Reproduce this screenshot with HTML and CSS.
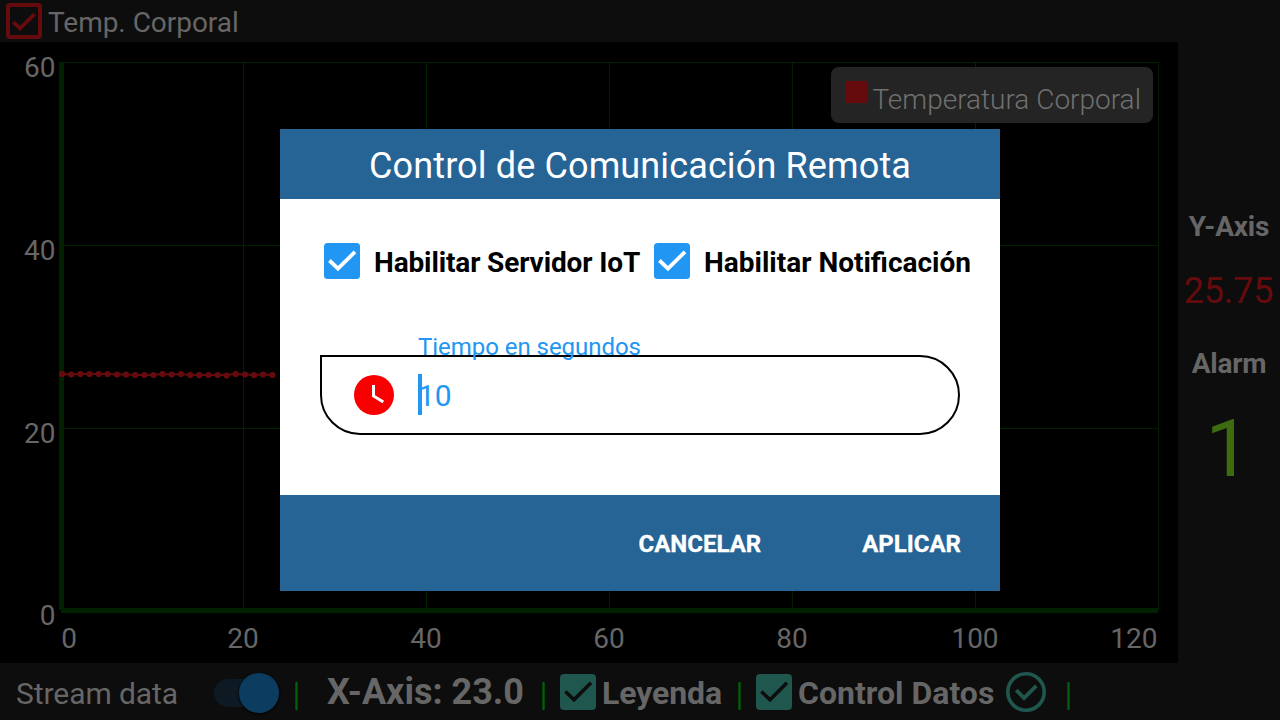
FILE: index.html
```html
<!DOCTYPE html>
<html lang="es">
<head>
<meta charset="utf-8">
<title>Control de Comunicación Remota</title>
<link rel="stylesheet" href="styles.css">
</head>
<body>
<div class="app">
  <header class="topbar">
    <svg class="top-check" width="36" height="36" viewBox="0 0 36 36"><rect x="2" y="2" width="32" height="32" rx="2" fill="none" stroke="#660b0d" stroke-width="4"/><path d="M7.3 19.2 14 25.4 28.5 11.2" fill="none" stroke="#660b0d" stroke-width="3.8"/></svg>
    <span class="top-label">Temp. Corporal</span>
  </header>
  <main class="middle">
    <svg class="chart" width="1178" height="621" viewBox="0 42 1178 621">
      <g fill="#002000">
        <rect x="64" y="62" width="1095" height="1"/><rect x="64" y="245" width="1095" height="1"/><rect x="64" y="428" width="1095" height="1"/>
        <rect x="243" y="62" width="1" height="547"/><rect x="426" y="62" width="1" height="547"/><rect x="609" y="62" width="1" height="547"/><rect x="792" y="62" width="1" height="547"/><rect x="975" y="62" width="1" height="547"/><rect x="1158" y="62" width="1" height="548"/>
        <rect x="59" y="62" width="5" height="548"/><rect x="61" y="608" width="1097" height="5"/>
      </g>
      <path d="M62 374 71 374.500 80 374 107 374 117 374.500 126 374.500 135 375 153 375 162 374 171 374.500 181 374 190 375 226 375 235 374 245 374.500 254 375 263 374.500 272 375" fill="none" stroke="#660b0d" stroke-width="2"/>
      <path class="points" d="M62 374h0M71.300 374.500h0M80.400 374h0M89.500 374h0M98.600 374h0M107.500 374h0M117 374.500h0M126 374.500h0M135.300 375h0M144.400 375h0M153.500 375h0M162.600 374h0M171.600 374.500h0M181 374h0M190.200 375h0M199.300 375.200h0M208.500 375h0M217.600 375h0M226.600 375.500h0M235.600 374h0M245 374.500h0M254 375h0M263.200 374.500h0M272.400 375h0"/>
      <g class="axis-text">
        <g text-anchor="end"><text x="55.500" y="77">60</text><text x="55.500" y="260">40</text><text x="55.500" y="443">20</text><text x="55.500" y="625">0</text><text x="1157.500" y="648">120</text></g>
        <g text-anchor="middle"><text x="69" y="648">0</text><text x="243" y="648">20</text><text x="426" y="648">40</text><text x="609" y="648">60</text><text x="792" y="648">80</text><text x="975" y="648">100</text></g>
      </g>
      <rect x="831" y="67" width="322" height="56" rx="8" fill="#242424"/>
      <rect x="845" y="81" width="22" height="22" fill="#660b0d"/>
      <text class="legend-text" x="872.500" y="109">Temperatura Corporal</text>
    </svg>
    <aside class="side">
      <div class="side-title">Y-Axis</div>
      <div class="side-value">25.75</div>
      <div class="side-title alarm">Alarm</div>
      <div class="side-alarm">1</div>
    </aside>
  </main>
  <footer class="bottombar">
    <span class="stream">Stream data</span>
    <span class="track"><span class="thumb"></span></span>
    <span class="sep s1"></span>
    <span class="xaxis">X-Axis: 23.0</span>
    <span class="sep s2"></span>
    <svg class="foot-check" width="36" height="36" viewBox="0 0 36 36"><rect width="36" height="36" rx="4" fill="#1f574e"/><path d="M5.400 17.500 14 25.700 31 8.800" fill="none" stroke="#0d0d0d" stroke-width="3.600"/></svg>
    <span class="foot-label leyenda">Leyenda</span>
    <span class="sep s3"></span>
    <svg class="foot-check" width="36" height="36" viewBox="0 0 36 36"><rect width="36" height="36" rx="4" fill="#1f574e"/><path d="M5.400 17.500 14 25.700 31 8.800" fill="none" stroke="#0d0d0d" stroke-width="3.600"/></svg>
    <span class="foot-label datos">Control Datos</span>
    <svg class="ring" width="40" height="40" viewBox="0 0 40 40"><circle cx="20" cy="20" r="18.200" fill="none" stroke="#1f574e" stroke-width="3.600"/><path d="M10.300 18.200 18 26 30.300 13.800" fill="none" stroke="#1f574e" stroke-width="3.800"/></svg>
    <span class="sep s4"></span>
  </footer>
  <section class="dialog">
    <h1 class="dialog-title"><span>Control de Comunicación Remota</span></h1>
    <div class="dialog-body">
      <div class="options">
        <svg width="36" height="36" viewBox="0 0 36 36"><rect width="36" height="36" rx="3.500" fill="#2196f3"/><path d="M5.400 17.500 14 25.700 31 8.800" fill="none" stroke="#fff" stroke-width="3.800"/></svg>
        <span class="option-label first">Habilitar Servidor IoT</span>
        <svg width="36" height="36" viewBox="0 0 36 36"><rect width="36" height="36" rx="3.500" fill="#2196f3"/><path d="M5.400 17.500 14 25.700 31 8.800" fill="none" stroke="#fff" stroke-width="3.800"/></svg>
        <span class="option-label second">Habilitar Notificación</span>
      </div>
      <div class="field">
        <svg width="40" height="40" viewBox="0 0 40 40"><circle cx="20" cy="20" r="20" fill="#f90000"/><path d="M19.500 10V21L29.300 27" fill="none" stroke="#fff" stroke-width="3"/></svg>
        <span class="caret"></span>
        <span class="field-value">10</span>
        <span class="hint">Tiempo en segundos</span>
      </div>
    </div>
    <div class="actions"><span class="cancel">CANCELAR</span><span class="apply">APLICAR</span></div>
  </section>
</div>
</body>
</html>
```
FILE: styles.css
```css
* { box-sizing: border-box; }
body { margin: 0; background: #000; font-family: Roboto, "Liberation Sans", sans-serif; color: #666; }
svg { display: block; flex: none; }
span { white-space: nowrap; flex: none; }
.app { position: relative; width: 1280px; height: 720px; overflow: hidden; display: flex; flex-direction: column; }
.topbar { height: 42px; flex: none; background: #0d0d0d; display: flex; align-items: flex-start; padding: 3px 6px; gap: 6px; }
.top-label { font-size: 28px; line-height: 40px; letter-spacing: -0.03px; }
.middle { height: 621px; flex: none; display: flex; }
.points { fill: none; stroke: #660b0d; stroke-width: 6.2; stroke-linecap: round; }
.axis-text { font-size: 28px; fill: #666; }
.legend-text { font-size: 28px; font-weight: 300; fill: #707070; }
.side { width: 102px; background: #0d0d0d; text-align: center; padding-top: 168px; }
.side-title { font-size: 28px; font-weight: 700; line-height: 33px; letter-spacing: -0.2px; }
.side-value { font-size: 36px; line-height: 42px; margin-top: 27px; padding-right: 1px; letter-spacing: -0.2px; color: #660b0d; }
.alarm { margin-top: 35px; }
.side-alarm { font-size: 80px; line-height: 94px; margin-top: 22px; padding-right: 2px; color: #3f6b10; }
.bottombar { height: 57px; flex: none; background: #0d0d0d; display: flex; align-items: center; padding: 0 0 0 16px; }
.stream { font-size: 30px; line-height: 36px; width: 198px; padding-top: 5px; letter-spacing: -0.07px; }
.track { position: relative; width: 65px; height: 28px; border-radius: 14px; background: #0d1a24; margin-top: 2px; }
.thumb { position: absolute; left: 25px; top: -6px; width: 40px; height: 40px; border-radius: 50%; background: #0d3c61; box-shadow: 0 1px 3px #000; }
.sep { width: 3px; height: 28px; background: linear-gradient(90deg, #044309 33%, #035f09 33% 67%, #044309 67%); margin-top: 8px; }
.s1 { margin-left: 16px; }
.xaxis { font-size: 36px; font-weight: 700; line-height: 42px; width: 214px; margin-left: 29px; }
.s2 { margin-left: 1px; }
.foot-check { margin-left: 15px; }
.foot-label { font-size: 32px; font-weight: 700; line-height: 38px; padding-left: 6px; padding-top: 3px; }
.leyenda { width: 142px; letter-spacing: -0.1px; }
.datos { width: 214px; }
.s4 { margin-left: 21px; }
.dialog { position: absolute; left: 280px; top: 129px; width: 720px; height: 462px; background: #fff; display: flex; flex-direction: column; color: #fff; }
.dialog-title { margin: 0; height: 70px; flex: none; background: #266496; font-size: 36px; font-weight: 400; line-height: 74px; letter-spacing: 0.13px; text-align: center; }
.dialog-body { height: 296px; flex: none; padding: 44px 0 0 40px; }
.options { height: 36px; padding-left: 4px; display: flex; align-items: center; }
.option-label { color: #000; font-size: 28px; font-weight: 700; line-height: 34px; padding: 3px 0 0 14px; }
.first { width: 294px; letter-spacing: -0.13px; }
.field { position: relative; margin-top: 76px; width: 640px; height: 80px; border: 2px solid #000; border-radius: 0 40px 40px 40px; padding-left: 32px; display: flex; align-items: center; color: #2196f3; }
.caret { width: 4px; height: 41px; background: #2196f3; margin: -1px 0 0 24px; }
.field-value { font-size: 30px; margin-left: -4px; }
.hint { position: absolute; left: 96px; top: -24px; font-size: 24px; line-height: 28px; letter-spacing: -0.04px; }
.actions { height: 96px; flex: none; background: #266496; display: flex; justify-content: flex-end; gap: 101px; padding-right: 39px; font-size: 24px; font-weight: 700; line-height: 98px; -webkit-text-stroke: 0.3px #fff; }
```
